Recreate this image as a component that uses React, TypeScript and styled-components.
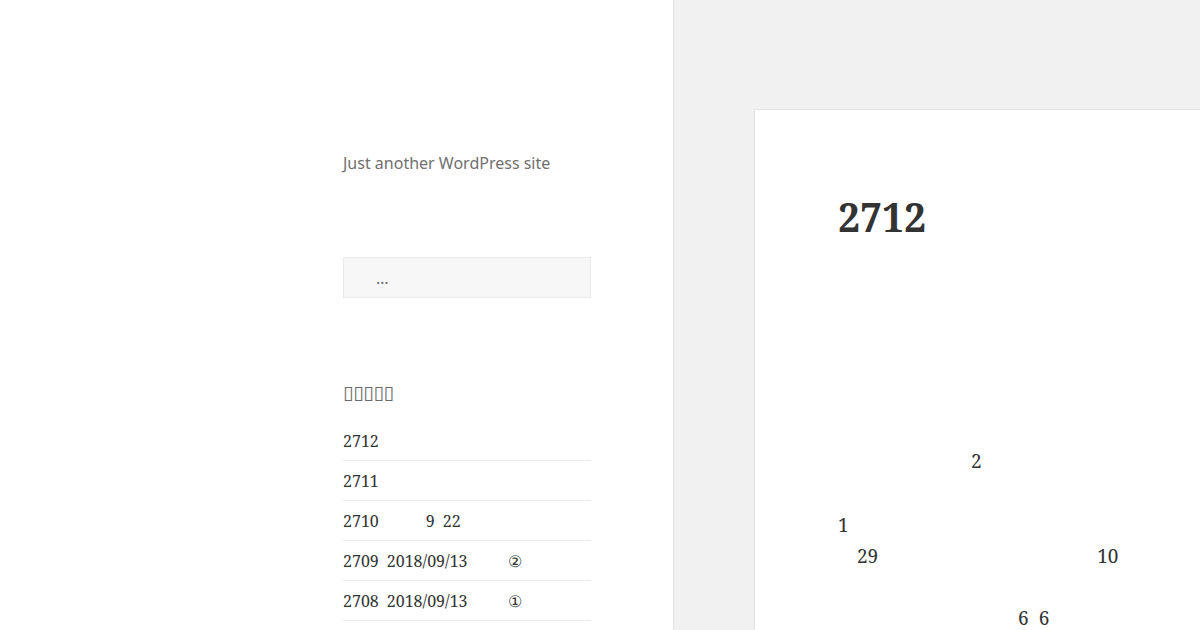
import React from 'react';
import styled, { createGlobalStyle } from 'styled-components';

const GlobalStyle = createGlobalStyle`
  html, body {
    margin: 0;
    padding: 0;
  }
  body {
    background: #f1f1f1;
    color: #333;
    font-family: 'Noto Serif', 'DejaVu Serif', serif;
    overflow: hidden;
  }
`;

const Site = styled.div`
  display: flex;
  width: 1200px;
  height: 630px;
  overflow: hidden;
`;

const Sidebar = styled.aside`
  flex: 0 0 673px;
  box-sizing: border-box;
  background: #fff;
  box-shadow: 0 0 2px rgba(0, 0, 0, 0.18);
  padding: 151px 0 0 343px;
  position: relative;
  z-index: 1;
`;

const SidebarInner = styled.div`
  width: 248px;
`;

const Tagline = styled.p`
  margin: 0;
  font-family: 'Noto Sans', sans-serif;
  font-size: 16px;
  line-height: 24px;
  color: #707070;
`;

const SearchField = styled.input`
  display: block;
  box-sizing: border-box;
  width: 100%;
  height: 41px;
  margin-top: 82px;
  padding: 0 0 0 32px;
  background: #f7f7f7;
  border: 1px solid #eaeaea;
  border-radius: 0;
  font-family: 'Noto Sans', sans-serif;
  font-size: 16px;
  color: #707070;
  outline: none;

  &::placeholder {
    color: #707070;
  }
`;

const WidgetTitle = styled.h2`
  margin: 84px 0 19px;
  font-family: 'DejaVu Sans', sans-serif;
  font-size: 19px;
  font-weight: 400;
  line-height: 20px;
  letter-spacing: -0.3px;
  color: #6a6a6a;
`;

const PostList = styled.ul`
  list-style: none;
  margin: 0;
  padding: 0;
`;

const PostItem = styled.li`
  padding: 8px 0 7px;
  font-size: 16px;
  line-height: 24px;
  border-bottom: 1px solid #eaeaea;
  white-space: nowrap;
`;

const Gap = styled.span<{ w: number }>`
  display: inline-block;
  width: ${p => p.w}px;
`;

const Main = styled.main`
  flex: 1;
  padding: 110px 0 0 82px;
`;

const Article = styled.article`
  width: 700px;
  min-height: 640px;
  box-sizing: border-box;
  background: #fff;
  box-shadow: 0 0 2px rgba(0, 0, 0, 0.18);
  padding: 83px 0 0 83px;
`;

const EntryTitle = styled.h1`
  margin: 0 0 205px;
  font-size: 39px;
  font-weight: 700;
  line-height: 48px;
  color: #333;
`;

const Paragraph = styled.div`
  margin-bottom: 33px;
`;

const Line = styled.div`
  height: 31px;
  font-size: 19px;
  line-height: 31px;
  white-space: pre;
`;

type Segment = string | number;

const recentPosts: Segment[][] = [
  ['2712'],
  ['2711'],
  ['2710', 47, '9', 8, '22'],
  ['2709', 8, '2018/09/13', 40, '②'],
  ['2708', 8, '2018/09/13', 40, '①'],
];

const renderSegments = (segments: Segment[]) =>
  segments.map((s, i) =>
    typeof s === 'number' ? <Gap key={i} w={s} /> : <React.Fragment key={i}>{s}</React.Fragment>
  );

const App: React.FC = () => {
  return (
    <>
      <GlobalStyle />
      <Site>
        <Sidebar>
          <SidebarInner>
            <Tagline>Just another WordPress site</Tagline>
            <SearchField type="search" placeholder="…" />
            <WidgetTitle>▯▯▯▯▯</WidgetTitle>
            <PostList>
              {recentPosts.map((post, i) => (
                <PostItem key={i}>{renderSegments(post)}</PostItem>
              ))}
            </PostList>
          </SidebarInner>
        </Sidebar>

        <Main>
          <Article>
            <EntryTitle>2712</EntryTitle>
            <Paragraph>
              <Line>{renderSegments([133, '2'])}</Line>
            </Paragraph>
            <Paragraph>
              <Line>1</Line>
              <Line>{renderSegments([19, '29', 219, '10'])}</Line>
              <Line />
              <Line>{renderSegments([180, '6', 10, '6'])}</Line>
            </Paragraph>
          </Article>
        </Main>
      </Site>
    </>
  );
};

export default App;
